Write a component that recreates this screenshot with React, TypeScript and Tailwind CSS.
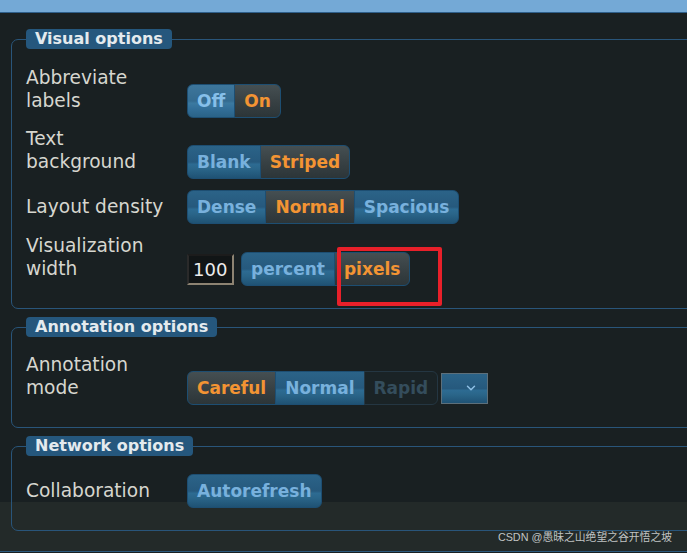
import React from 'react';
import { ChevronDown } from 'lucide-react';

type SegState = 'off' | 'on' | 'hover' | 'disabled';

interface Seg {
  label: string;
  state: SegState;
}

const segClass: Record<SegState, string> = {
  off: 'text-[#78b1dd] bg-[linear-gradient(to_bottom,#2b6388_0%,#26597d_50%,#2d6b92_57%,#2a6589_72%,#1f5274_100%)]',
  hover: 'text-[#86bfe9] bg-[linear-gradient(to_bottom,#3d769c_0%,#346b90_50%,#3b79a0_57%,#33709a_72%,#2a6287_100%)]',
  on: 'text-[#f39433] bg-[linear-gradient(to_bottom,#454f52_0%,#384144_50%,#2c3538_100%)]',
  disabled: 'text-[#344d5c] bg-[#1a2326] border-[#243642]',
};

const ButtonGroup: React.FC<{ segs: Seg[] }> = ({ segs }) => (
  <div className="flex">
    {segs.map((s, i) => (
      <div
        key={s.label}
        className={`border border-[#1d4e72] px-[9px] py-[6px] text-[17px] font-bold leading-[20px] ${segClass[s.state]} ${
          i > 0 ? '-ml-px' : 'rounded-l-[6px]'
        } ${i === segs.length - 1 ? 'rounded-r-[6px]' : ''}`}
      >
        {s.label}
      </div>
    ))}
  </div>
);

const Section: React.FC<{ title: string; children: React.ReactNode; className?: string }> = ({
  title,
  children,
  className,
}) => (
  <fieldset
    className={`ml-[11px] mr-[-20px] rounded-[7px] border border-[#29557a] pl-[14px] pb-[28px] ${className ?? ''}`}
  >
    <legend className="rounded-[4px] bg-[#25577d] px-[9px] text-[16px] font-bold leading-[20px] text-[#e4eaee]">
      {title}
    </legend>
    {children}
  </fieldset>
);

const Row: React.FC<{ label: React.ReactNode; children: React.ReactNode; className?: string }> = ({
  label,
  children,
  className,
}) => (
  <div className={`flex items-end ${className ?? ''}`}>
    <div className="w-[161px] shrink-0 text-[18.6px] leading-[23px] text-[#d6d6cf]">{label}</div>
    <div className="mb-[-6px] flex items-center">{children}</div>
  </div>
);

export default function App() {
  return (
    <div
      className="relative h-[553px] w-full overflow-hidden bg-[linear-gradient(to_bottom,#192022_0,#192022_502px,#232a29_502px,#232a29_551px,#2b5a7e_551px,#2b5a7e_552px,#192022_552px)]"
      style={{ fontFamily: '"DejaVu Sans", "Noto Sans CJK SC", sans-serif' }}
    >
      {/* dialog title bar, mostly scrolled out of view */}
      <div className="h-[13px] border-b border-[#2f5f8a] bg-[#74a9d6]" />

      <Section title="Visual options" className="mt-[16px]">
        <Row label={<>Abbreviate<br />labels</>} className="mt-[17px]">
          <ButtonGroup
            segs={[
              { label: 'Off', state: 'hover' },
              { label: 'On', state: 'on' },
            ]}
          />
        </Row>
        <Row label={<>Text<br />background</>} className="mt-[15px]">
          <ButtonGroup
            segs={[
              { label: 'Blank', state: 'off' },
              { label: 'Striped', state: 'on' },
            ]}
          />
        </Row>
        <Row label="Layout density" className="mt-[17px]">
          <ButtonGroup
            segs={[
              { label: 'Dense', state: 'off' },
              { label: 'Normal', state: 'on' },
              { label: 'Spacious', state: 'off' },
            ]}
          />
        </Row>
        <Row label={<>Visualization<br />width</>} className="mt-[16px]">
          <div className="h-[31px] w-[47px] border-2 border-t-[#1c1c1c] border-l-[#2a2a2a] border-r-[#8d8372] border-b-[#8d8372] bg-[#111516] pl-[4px] text-[18px] leading-[27px] text-[#ececec]">
            100
          </div>
          <div className="ml-[7px]">
            <ButtonGroup
              segs={[
                { label: 'percent', state: 'off' },
                { label: 'pixels', state: 'on' },
              ]}
            />
          </div>
        </Row>
      </Section>

      <Section title="Annotation options" className="mt-[8px]">
        <Row label={<>Annotation<br />mode</>} className="mt-[16px]">
          <ButtonGroup
            segs={[
              { label: 'Careful', state: 'on' },
              { label: 'Normal', state: 'off' },
              { label: 'Rapid', state: 'disabled' },
            ]}
          />
          <div className="ml-[3px] flex h-[31px] w-[47px] items-center justify-end border border-[#5d6f7a] bg-[linear-gradient(to_bottom,#2b6388_0%,#26597d_50%,#2d6b92_57%,#2a6589_72%,#1f5274_100%)] pr-[9px]">
            <ChevronDown size={14} strokeWidth={2.5} color="#8fc0e6" />
          </div>
        </Row>
      </Section>

      <Section title="Network options" className="mt-[8px]">
        <Row label="Collaboration" className="mt-[18px]">
          <div className="rounded-[6px] border border-[#1d4e72] px-[9px] py-[6px] text-[17px] font-bold leading-[20px] text-[#78b1dd] bg-[linear-gradient(to_bottom,#2b6388_0%,#26597d_50%,#2d6b92_57%,#2a6589_72%,#1f5274_100%)]">
            Autorefresh
          </div>
        </Row>
      </Section>

      {/* red highlight box drawn over the screenshot */}
      <div className="absolute left-[337px] top-[247px] h-[59px] w-[105px] rounded-[2px] border-4 border-[#e8202a]" />

      <div
        className="absolute bottom-[9px] right-[15px] text-[10.8px] leading-[14px] text-[#c0c4c4]"
        style={{ fontFamily: '"Liberation Sans", "Noto Sans CJK SC", sans-serif' }}
      >
        CSDN @愚昧之山绝望之谷开悟之坡
      </div>
    </div>
  );
}
